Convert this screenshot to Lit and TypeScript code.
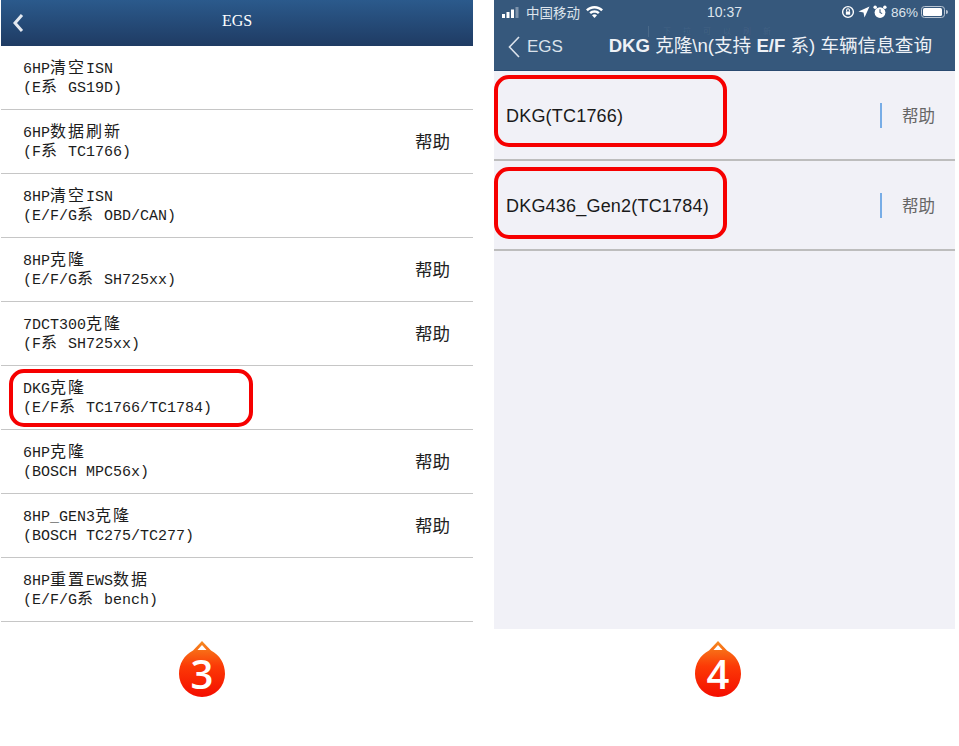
import { LitElement, html, css, svg } from "lit";
import { customElement } from "lit/decorators.js";

type Row = { a: string; b: string; help?: boolean; mark?: boolean };

const rows: Row[] = [
  { a: "6HP清空ISN", b: "(E系 GS19D)" },
  { a: "6HP数据刷新", b: "(F系 TC1766)", help: true },
  { a: "8HP清空ISN", b: "(E/F/G系 OBD/CAN)" },
  { a: "8HP克隆", b: "(E/F/G系 SH725xx)", help: true },
  { a: "7DCT300克隆", b: "(F系 SH725xx)", help: true },
  { a: "DKG克隆", b: "(E/F系 TC1766/TC1784)", mark: true },
  { a: "6HP克隆", b: "(BOSCH MPC56x)", help: true },
  { a: "8HP_GEN3克隆", b: "(BOSCH TC275/TC277)", help: true },
  { a: "8HP重置EWS数据", b: "(E/F/G系 bench)" },
];

function mixed(t: string) {
  return t
    .split(/([\u4e00-\u9fff]+)/)
    .map((p, i) => (i % 2 ? html`<span class="cjk">${p}</span>` : p));
}

function drop(n: string) {
  return html`<svg class="drop" width="50" height="60" viewBox="0 0 50 60">
    <defs>
      <linearGradient id="dg${n}" x1="0" y1="0" x2="0" y2="1">
        <stop offset="0" stop-color="#f58a20" />
        <stop offset="0.45" stop-color="#fc3a06" />
        <stop offset="1" stop-color="#f40d00" />
      </linearGradient>
    </defs>
    <path
      d="M25 1 L34 10.5 C43 15 48 24 48 34 A23 23 0 0 1 2 34 C2 24 7 15 16 10.5 Z"
      fill="url(#dg${n})"
    />
    <path d="M25 5 L29.5 10 L20.5 10 Z" fill="#fff" />
    ${svg`<text x="25" y="49" text-anchor="middle" class="num">${n}</text>`}
  </svg>`;
}

@customElement("app-root")
export class AppRoot extends LitElement {
  static styles = css`
    :host {
      display: block;
      width: 959px;
      height: 746px;
      background: #fff;
      overflow: hidden;
    }
    .page {
      display: flex;
      align-items: flex-start;
      padding-left: 1px;
      gap: 21px;
    }
    .left {
      width: 472px;
      display: flex;
      flex-direction: column;
    }
    .lhead {
      height: 46px;
      background: linear-gradient(#2b5a8c, #1f3b63);
      color: #fff;
      display: flex;
      align-items: center;
      justify-content: center;
      position: relative;
      font: 16px "Liberation Serif", serif;
      padding-bottom: 5px;
      box-sizing: border-box;
    }
    .lback {
      position: absolute;
      left: 11px;
      top: 13px;
    }
    .row {
      height: 64px;
      box-sizing: border-box;
      border-bottom: 1px solid #c6c6c6;
      padding: 3px 23px 0 22px;
      display: flex;
      align-items: center;
      justify-content: space-between;
      position: relative;
    }
    .txt {
      font: 15px/19px "Liberation Mono", "Noto Sans CJK SC", monospace;
      color: #1c1c1c;
      white-space: pre;
    }
    .cjk {
      font-family: "Noto Sans CJK SC", sans-serif;
      font-size: 16px;
      line-height: 0;
      letter-spacing: 2px;
    }
    .help {
      font: 17.5px/1 "Noto Sans CJK SC", sans-serif;
      color: #222;
      margin-bottom: 5px;
    }
    .mark {
      position: absolute;
      border: 4px solid #f60000;
      border-radius: 15px;
      box-sizing: border-box;
    }
    .lmark {
      left: 8px;
      top: 3px;
      width: 244px;
      height: 58px;
    }
    .badge {
      display: flex;
      justify-content: center;
      margin-top: 18px;
    }
    .left .badge {
      padding-right: 70px;
    }
    .right .badge {
      padding-right: 13px;
      margin-top: 11px;
    }
    .right {
      width: 461px;
      display: flex;
      flex-direction: column;
    }
    .phone {
      height: 629px;
      background: #f1f1f7;
      display: flex;
      flex-direction: column;
    }
    .rhead {
      height: 71px;
      background: #36587c;
      color: #e6ebf2;
      box-sizing: border-box;
      border-bottom: 1px solid #2a4a70;
      font-family: "Liberation Sans", "Noto Sans CJK SC", sans-serif;
      flex: none;
      position: relative;
    }
    .ghost {
      position: absolute;
      left: 154px;
      top: 26px;
      font-size: 8px;
      line-height: 11px;
      letter-spacing: 12px;
      color: rgba(255, 255, 255, 0.07);
      border-left: 1px solid rgba(255, 255, 255, 0.1);
      padding-left: 14px;
      white-space: nowrap;
    }
    .status {
      height: 24px;
      display: grid;
      grid-template-columns: 1fr auto 1fr;
      align-items: center;
      padding: 0 7px 0 8px;
      font-size: 13.5px;
      color: #dde4ec;
    }
    .sl,
    .sr {
      display: flex;
      align-items: center;
      gap: 6px;
    }
    .sr {
      justify-content: flex-end;
      gap: 3px;
    }
    .sr span {
      margin-left: 1px;
    }
    .time {
      font-size: 14px;
      padding-right: 1px;
    }
    .nav {
      height: 46px;
      display: flex;
      align-items: center;
      justify-content: space-between;
      padding: 0 23px 1px 14px;
      position: relative;
    }
    .rback {
      display: flex;
      align-items: center;
      gap: 7px;
      font-size: 17px;
      color: #dbe2eb;
    }
    .title {
      font-size: 18.6px;
      line-height: 22px;
      margin-bottom: 2px;
      color: #eef1f6;
      white-space: nowrap;
    }
    .title b {
      font-weight: 700;
    }
    .rrow {
      height: 90px;
      box-sizing: border-box;
      border-bottom: 2px solid #bdbdbd;
      flex: none;
      display: flex;
      align-items: center;
      justify-content: space-between;
      padding: 2px 20px 0 12px;
      position: relative;
      font: 18px "Liberation Sans", sans-serif;
      letter-spacing: 0.2px;
      color: #1a1a1a;
    }
    .rtools {
      display: flex;
      align-items: center;
      gap: 20px;
      margin-bottom: 2px;
    }
    .bar {
      width: 2px;
      height: 25px;
      background: #78ade6;
    }
    .rhelp {
      font: 16.5px "Noto Sans CJK SC", sans-serif;
      letter-spacing: 0;
      color: #666;
    }
    .rmark {
      left: 0;
      top: 4px;
      width: 233px;
      height: 72px;
    }
    .rmark.second {
      top: 6px;
    }
    .num {
      font: 600 40px "Open Sans", sans-serif;
      fill: #fff;
    }
  `;

  render() {
    return html`<div class="page">
      <section class="left">
        <header class="lhead">
          <svg class="lback" width="12" height="20" viewBox="0 0 12 20">
            <path d="M10 2 L3 10 L10 18" fill="none" stroke="#e4e9f0" stroke-width="3" />
          </svg>
          EGS
        </header>
        ${rows.map(
          (r) => html`<div class="row">
            <div class="txt">${mixed(r.a)}<br />${mixed(r.b)}</div>
            ${r.help ? html`<span class="help">帮助</span>` : ""}
            ${r.mark ? html`<div class="mark lmark"></div>` : ""}
          </div>`
        )}
        <div class="badge">${drop("3")}</div>
      </section>
      <section class="right">
        <div class="phone">
          <header class="rhead">
            <div class="ghost">下拉可以刷新</div>
            <div class="status">
              <div class="sl">
                <svg width="18" height="11" viewBox="0 0 18 11">
                  <rect x="0" y="7" width="3" height="4" fill="#fff" />
                  <rect x="4.5" y="5" width="3" height="6" fill="#fff" />
                  <rect x="9" y="2.5" width="3" height="8.5" fill="#fff" />
                  <rect x="13.5" y="0" width="3" height="11" fill="#7d93ac" />
                </svg>
                <span>中国移动</span>
                <svg width="17" height="12" viewBox="0 0 17 12">
                  <path d="M8.5 0 C5 0 2.3 1.3 0 3.4 L1.8 5.3 C3.6 3.6 5.9 2.6 8.5 2.6 C11.1 2.6 13.4 3.6 15.2 5.3 L17 3.4 C14.7 1.3 12 0 8.5 0 Z" fill="#fff" />
                  <path d="M8.5 4.2 C6.5 4.2 4.7 5 3.3 6.3 L5 8.1 C6 7.2 7.2 6.7 8.5 6.7 C9.8 6.7 11 7.2 12 8.1 L13.7 6.3 C12.3 5 10.5 4.2 8.5 4.2 Z" fill="#fff" />
                  <path d="M8.5 12 L6 9.3 C6.7 8.7 7.6 8.3 8.5 8.3 C9.4 8.3 10.3 8.7 11 9.3 Z" fill="#fff" />
                </svg>
              </div>
              <div class="time">10:37</div>
              <div class="sr">
                <svg width="14" height="14" viewBox="0 0 13 13">
                  <circle cx="6.5" cy="6.5" r="5" fill="none" stroke="#fff" stroke-width="1.3" />
                  <rect x="4.5" y="6" width="4" height="3" fill="#fff" />
                  <path d="M5.2 6 V4.8 A1.3 1.3 0 0 1 7.8 4.8 V6" fill="none" stroke="#fff" />
                </svg>
                <svg width="12" height="12" viewBox="0 0 12 12">
                  <path d="M11.5 0.5 L6.5 11.5 L5.5 6.5 L0.5 5.5 Z" fill="#fff" />
                </svg>
                <svg width="14" height="14" viewBox="0 0 13 13">
                  <circle cx="6.5" cy="7" r="5" fill="#fff" />
                  <path d="M6.5 4 V7 L8.5 8" fill="none" stroke="#36587c" stroke-width="1" />
                  <circle cx="2" cy="2" r="1.6" fill="#fff" />
                  <circle cx="11" cy="2" r="1.6" fill="#fff" />
                </svg>
                <span>86%</span>
                <svg width="27" height="12" viewBox="0 0 27 12">
                  <rect x="0.5" y="0.5" width="23" height="11" rx="3" fill="none" stroke="#b9c5d3" />
                  <rect x="2" y="2" width="19" height="8" rx="1.5" fill="#fff" />
                  <path d="M25 4 A2 2 0 0 1 25 8 Z" fill="#b9c5d3" />
                </svg>
              </div>
            </div>
            <div class="nav">
              <div class="rback">
                <svg width="12" height="22" viewBox="0 0 12 22">
                  <path d="M11 1 L1.5 11 L11 21" fill="none" stroke="#dbe2eb" stroke-width="1.6" />
                </svg>
                EGS
              </div>
              <div class="title"><b>DKG</b> 克隆\\n(支持 <b>E/F</b> 系) 车辆信息查询</div>
            </div>
          </header>
          <div class="rrow">
            DKG(TC1766)
            <div class="rtools"><i class="bar"></i><span class="rhelp">帮助</span></div>
            <div class="mark rmark"></div>
          </div>
          <div class="rrow">
            DKG436_Gen2(TC1784)
            <div class="rtools"><i class="bar"></i><span class="rhelp">帮助</span></div>
            <div class="mark rmark second"></div>
          </div>
        </div>
        <div class="badge">${drop("4")}</div>
      </section>
    </div>`;
  }
}
